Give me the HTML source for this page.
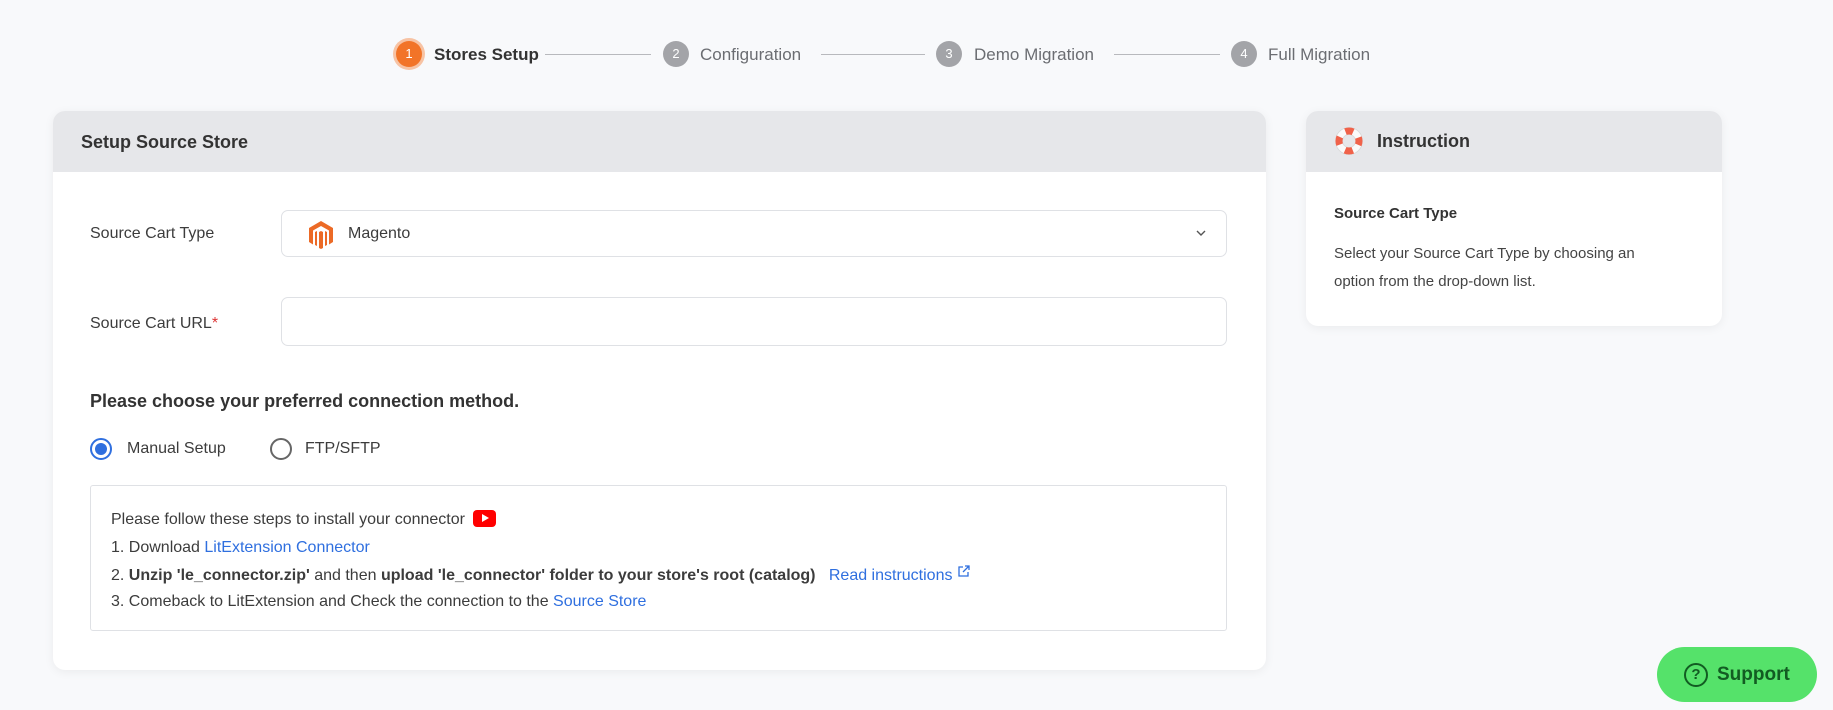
<!DOCTYPE html>
<html><head><meta charset="utf-8"><style>
*{box-sizing:border-box;margin:0;padding:0}
body{width:1833px;height:710px;background:#f8f9fb;font-family:"Liberation Sans",sans-serif;color:#3c3c3c;position:relative;overflow:hidden}
.abs{position:absolute;white-space:nowrap}
.c{position:absolute;width:26px;height:26px;border-radius:50%;background:#a3a4a8;color:#fff;font-size:13px;text-align:center;line-height:26px}
.st{position:absolute;font-size:17px;color:#6b6d72;top:45px}
.ln{position:absolute;top:54px;height:1px;background:#b8b9bd}
.card{position:absolute;background:#fff;border-radius:12px;box-shadow:0 2px 10px rgba(0,0,0,.06);overflow:hidden}
.hd{background:#e6e7ea;height:61px}
.lbl{font-size:16px;color:#3c3c3c}
.inp{position:absolute;border:1px solid #dfe1e5;border-radius:7px;background:#fff}
.blue{color:#2f6fdf}
</style></head><body>
<div class="c" style="left:396px;top:41px;background:#f27428;box-shadow:0 0 0 3px #f7c3a4">1</div>
<div class="st" style="left:434px;color:#333;font-weight:bold">Stores Setup</div>
<div class="ln" style="left:545px;width:106px"></div>
<div class="c" style="left:663px;top:41px">2</div>
<div class="st" style="left:700px">Configuration</div>
<div class="ln" style="left:821px;width:104px"></div>
<div class="c" style="left:936px;top:41px">3</div>
<div class="st" style="left:974px">Demo Migration</div>
<div class="ln" style="left:1114px;width:106px"></div>
<div class="c" style="left:1231px;top:41px">4</div>
<div class="st" style="left:1268px">Full Migration</div>

<div class="card" style="left:53px;top:111px;width:1213px;height:559px">
 <div class="hd"><div class="abs" style="left:28px;top:21px;font-size:18px;font-weight:bold;color:#333">Setup Source Store</div></div>
 <div class="abs lbl" style="left:37px;top:114px">Source Cart Type</div>
 <div class="inp" style="left:228px;top:99px;width:946px;height:47px">
  <svg style="position:absolute;left:25px;top:9px" width="28" height="30" viewBox="0 0 28 30"><path d="M14 1 L26 8 V22 L22 24.5 V10.5 L14 6 L6 10.5 V24.5 L2 22 V8 Z M12 12 L14 11 L16 12 V28 L14 29 L12 28 Z M8 12 L10 11 V26 L8 25Z M20 12 L18 11 V26 L20 25Z" fill="#ec6a26"/></svg>
  <div class="abs" style="left:66px;top:14px;font-size:16px">Magento</div>
  <svg style="position:absolute;right:20px;top:19px" width="10" height="7" viewBox="0 0 10 7"><path d="M1 1 L5 5 L9 1" stroke="#555" stroke-width="1.4" fill="none"/></svg>
 </div>
 <div class="abs lbl" style="left:37px;top:204px">Source Cart URL<span style="color:#d33">*</span></div>
 <div class="inp" style="left:228px;top:186px;width:946px;height:49px"></div>
 <div class="abs" style="left:37px;top:280px;font-size:18px;font-weight:bold;color:#333">Please choose your preferred connection method.</div>
 <div class="abs" style="left:37px;top:327px;width:22px;height:22px;border-radius:50%;border:2px solid #2f6fdf"><div style="margin:3px;width:12px;height:12px;border-radius:50%;background:#2f6fdf"></div></div>
 <div class="abs lbl" style="left:74px;top:329px">Manual Setup</div>
 <div class="abs" style="left:217px;top:327px;width:22px;height:22px;border-radius:50%;border:2px solid #666"></div>
 <div class="abs lbl" style="left:252px;top:329px">FTP/SFTP</div>
 <div class="inp" style="left:37px;top:374px;width:1137px;height:146px;border-radius:3px">
  <div class="abs lbl" style="left:20px;top:24px">Please follow these steps to install your connector <span style="display:inline-block;vertical-align:-3px;width:23px;height:17px;background:#f00;border-radius:4px;position:relative;margin-left:4px"><span style="position:absolute;left:9px;top:4px;border-left:7px solid #fff;border-top:4.5px solid transparent;border-bottom:4.5px solid transparent"></span></span></div>
  <div class="abs lbl" style="left:20px;top:53px">1. Download <span class="blue">LitExtension Connector</span></div>
  <div class="abs lbl" style="left:20px;top:79px">2. <b>Unzip 'le_connector.zip'</b> and then <b>upload 'le_connector' folder to your store's root (catalog)</b> &nbsp;&nbsp;<span class="blue">Read instructions</span> <svg width="13" height="13" viewBox="0 0 13 13" style="vertical-align:2px"><path d="M6 2H2V11H11V7M8 1H12V5M12 1L6 7" stroke="#2f6fdf" stroke-width="1.3" fill="none"/></svg></div>
  <div class="abs lbl" style="left:20px;top:107px">3. Comeback to LitExtension and Check the connection to the <span class="blue">Source Store</span></div>
 </div>
</div>

<div class="card" style="left:1306px;top:111px;width:416px;height:215px">
 <div class="hd">
  <svg style="position:absolute;left:28px;top:15px" width="30" height="30" viewBox="0 0 30 30"><circle cx="15" cy="15" r="10" fill="none" stroke="#fafafa" stroke-width="7"/><circle cx="15" cy="15" r="13.5" fill="none" stroke="#d8d8d8" stroke-width="0.8"/><circle cx="15" cy="15" r="6.5" fill="none" stroke="#d8d8d8" stroke-width="0.8"/><circle cx="15" cy="15" r="10" fill="none" stroke="#f0624a" stroke-width="7" stroke-dasharray="7.85 7.85" stroke-dashoffset="3.9"/></svg>
  <div class="abs" style="left:71px;top:20px;font-size:18px;font-weight:bold;color:#333">Instruction</div>
 </div>
 <div class="abs" style="left:28px;top:94px;font-size:15px;font-weight:bold;color:#333">Source Cart Type</div>
 <div class="abs" style="left:28px;top:129px;font-size:15px;line-height:28px;color:#444">Select your Source Cart Type by choosing an<br>option from the drop-down list.</div>
</div>

<div class="abs" style="left:1657px;top:647px;width:160px;height:55px;border-radius:28px;background:#55e26a">
 <div style="position:absolute;left:27px;top:16px;width:24px;height:24px;border:2.5px solid #125c22;border-radius:50%;color:#125c22;font-size:15px;font-weight:bold;text-align:center;line-height:19px">?</div>
 <div class="abs" style="left:60px;top:17px;font-size:19px;font-weight:bold;color:#125c22">Support</div>
</div>
</body></html>
